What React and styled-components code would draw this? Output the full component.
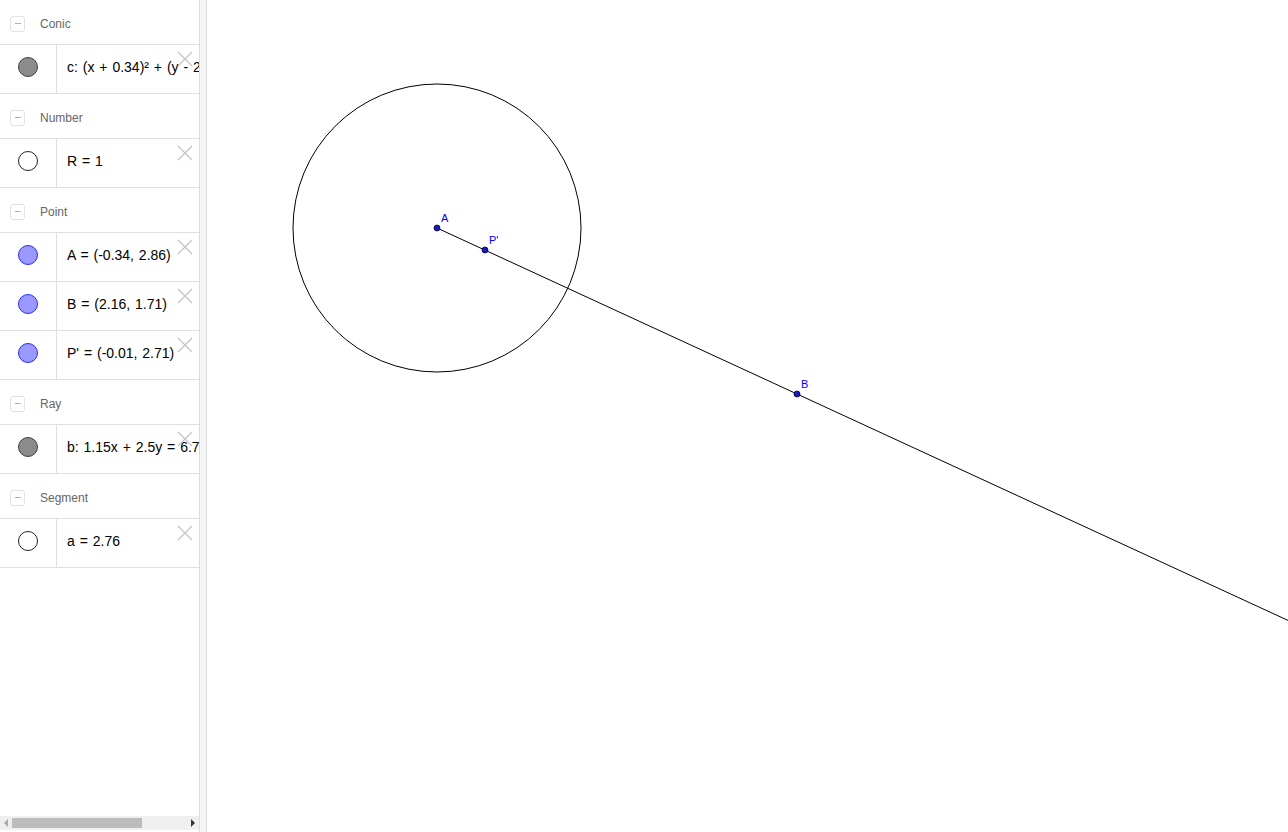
import { styled, createGlobalStyle } from "styled-components"

const Global = createGlobalStyle`
    html, body {
        margin: 0;
        padding: 0;
        background: white;
        overflow: hidden;
    }
    body {
        font-family: "Liberation Sans", Arial, sans-serif;
    }
`;

const Page = styled.div`
    display: flex;
    width: 1288px;
    height: 832px;
    background: white;
`;

const Panel = styled.div`
    width: 199px;
    flex-shrink: 0;
    height: 832px;
    display: flex;
    flex-direction: column;
    overflow: hidden;
`;

const List = styled.div`
    flex: 1;
    overflow: hidden;
`;

const GroupHeader = styled.div`
    height: 45px;
    box-sizing: border-box;
    padding-top: 3px;
    border-bottom: 1px solid #e0e0e0;
    display: flex;
    align-items: center;
    padding-left: 10px;
    gap: 15px;
    font-size: 12px;
    color: #666;
`;

const Collapse = styled.div`
    width: 13px;
    height: 14px;
    border: 1px solid #e2e2e2;
    border-radius: 3px;
    display: flex;
    align-items: center;
    justify-content: center;

    &::after {
        content: "";
        width: 6px;
        height: 1px;
        background: #b0b0b0;
    }
`;

const Item = styled.div`
    position: relative;
    height: 48px;
    border-bottom: 1px solid #e0e0e0;
    display: flex;
    overflow: hidden;
`;

const MarkerCell = styled.div`
    width: 57px;
    flex-shrink: 0;
    border-right: 1px solid #e0e0e0;
    display: flex;
    justify-content: center;
    padding-top: 12px;
    box-sizing: border-box;
`;

const Marker = styled.div`
    width: 18px;
    height: 18px;
    border-radius: 50%;
    border: 1px solid ${(p) => p.$border};
    background: ${(p) => p.$fill};
`;

const Formula = styled.div`
    padding-left: 10px;
    padding-top: 14px;
    font-size: 14px;
    word-spacing: 1px;
    color: #000;
    white-space: nowrap;
`;

const Close = styled.svg`
    position: absolute;
    top: 6px;
    right: 6px;
`;

const Scrollbar = styled.div`
    height: 14px;
    margin: 0 0 2px 0;
    background: #efefef;
    display: flex;
    align-items: center;
    padding: 0 4px;
    gap: 4px;
`;

const Arrow = styled.div`
    width: 0;
    height: 0;
    border-top: 4px solid transparent;
    border-bottom: 4px solid transparent;
    ${(p) => (p.$dir === "left" ? "border-right: 4px solid #aaa;" : "border-left: 4px solid #333;")}
`;

const Track = styled.div`
    flex: 1;
    height: 10px;
    display: flex;
`;

const Thumb = styled.div`
    width: 130px;
    height: 10px;
    background: #bcbcbc;
`;

const Divider = styled.div`
    width: 6px;
    flex-shrink: 0;
    height: 832px;
    background: #f5f5f5;
    border-left: 1px solid #dcdcdc;
    border-right: 1px solid #dcdcdc;
`;

const Canvas = styled.div`
    flex: 1;
    height: 832px;
    background: white;
`;

const groups = [
    {
        name: "Conic",
        items: [{ text: "c: (x + 0.34)² + (y - 2.86)² = 1", fill: "#8c8c8c", border: "#404040" }],
    },
    {
        name: "Number",
        items: [{ text: "R = 1", fill: "#fff", border: "#222" }],
    },
    {
        name: "Point",
        items: [
            { text: "A = (-0.34, 2.86)", fill: "#9999ff", border: "#2b2bff" },
            { text: "B = (2.16, 1.71)", fill: "#9999ff", border: "#2b2bff" },
            { text: "P' = (-0.01, 2.71)", fill: "#9999ff", border: "#2b2bff" },
        ],
    },
    {
        name: "Ray",
        items: [{ text: "b: 1.15x + 2.5y = 6.77", fill: "#8c8c8c", border: "#404040" }],
    },
    {
        name: "Segment",
        items: [{ text: "a = 2.76", fill: "#fff", border: "#222" }],
    },
];

const X = () => (
    <Close width="16" height="16" viewBox="0 0 16 16">
        <path d="M1 1 L15 15 M15 1 L1 15" stroke="#c6c6c6" strokeWidth="1.4" fill="none" />
    </Close>
);

// canvas coordinates are offset by the panel + divider (207px)
const ox = 207;
const A = { x: 437 - ox, y: 228 };
const B = { x: 797 - ox, y: 394 };
const P = { x: 485 - ox, y: 250 };
const slope = (B.y - A.y) / (B.x - A.x);
const endX = 1288 - ox;
const endY = A.y + slope * (endX - A.x);

const Dot = ({ pt, label }) => (
    <g>
        <circle cx={pt.x} cy={pt.y} r="3" fill="#1a1ab8" stroke="#000040" strokeWidth="0.8" />
        <text x={pt.x + 4} y={pt.y - 6} fontSize="11" fill="#0000ff" fontFamily="Liberation Sans, Arial, sans-serif">
            {label}
        </text>
    </g>
);

const App = () => {
    return (
        <Page>
            <Global />
            <Panel>
                <List>
                    {groups.map((g) => (
                        <div key={g.name}>
                            <GroupHeader>
                                <Collapse />
                                <span>{g.name}</span>
                            </GroupHeader>
                            {g.items.map((it) => (
                                <Item key={it.text}>
                                    <MarkerCell>
                                        <Marker $fill={it.fill} $border={it.border} />
                                    </MarkerCell>
                                    <Formula>{it.text}</Formula>
                                    <X />
                                </Item>
                            ))}
                        </div>
                    ))}
                </List>
                <Scrollbar>
                    <Arrow $dir="left" />
                    <Track>
                        <Thumb />
                    </Track>
                    <Arrow $dir="right" />
                </Scrollbar>
            </Panel>
            <Divider />
            <Canvas>
                <svg width={1288 - ox} height="832">
                    <circle cx={A.x} cy={A.y} r="144" fill="none" stroke="#000" strokeWidth="1" />
                    <line x1={A.x} y1={A.y} x2={endX} y2={endY} stroke="#000" strokeWidth="1" />
                    <Dot pt={A} label="A" />
                    <Dot pt={P} label="P'" />
                    <Dot pt={B} label="B" />
                </svg>
            </Canvas>
        </Page>
    );
};

export default App;
